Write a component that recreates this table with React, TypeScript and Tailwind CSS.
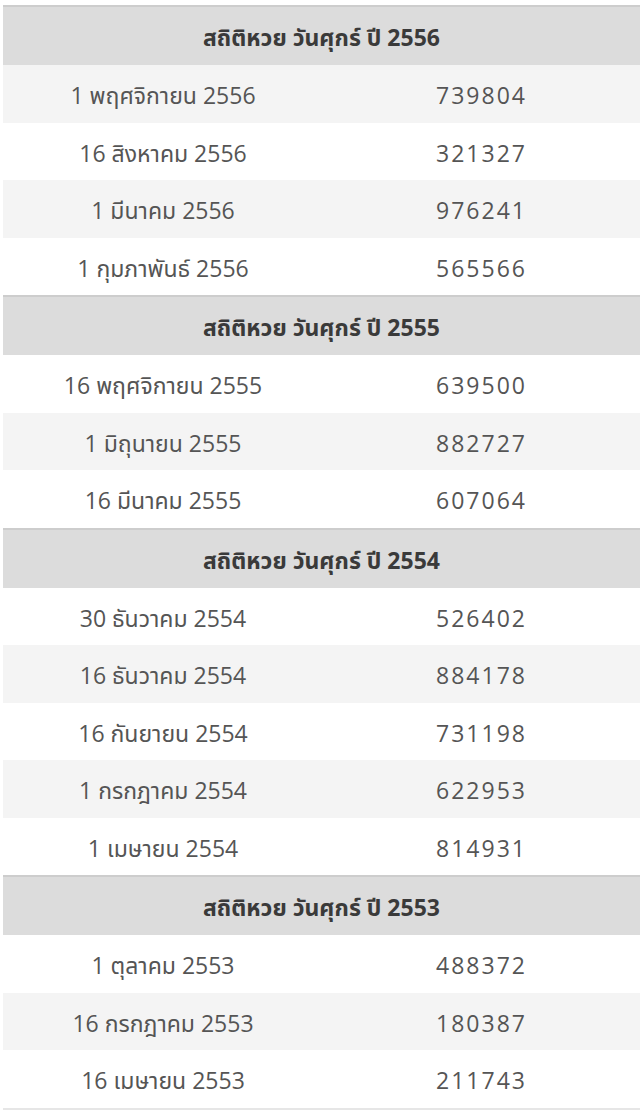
import React from 'react';

type Row = { date: string; num: string };
type Section = { year: string; rows: Row[] };

const sections: Section[] = [
  {
    year: '2556',
    rows: [
      { date: '1 พฤศจิกายน 2556', num: '739804' },
      { date: '16 สิงหาคม 2556', num: '321327' },
      { date: '1 มีนาคม 2556', num: '976241' },
      { date: '1 กุมภาพันธ์ 2556', num: '565566' },
    ],
  },
  {
    year: '2555',
    rows: [
      { date: '16 พฤศจิกายน 2555', num: '639500' },
      { date: '1 มิถุนายน 2555', num: '882727' },
      { date: '16 มีนาคม 2555', num: '607064' },
    ],
  },
  {
    year: '2554',
    rows: [
      { date: '30 ธันวาคม 2554', num: '526402' },
      { date: '16 ธันวาคม 2554', num: '884178' },
      { date: '16 กันยายน 2554', num: '731198' },
      { date: '1 กรกฎาคม 2554', num: '622953' },
      { date: '1 เมษายน 2554', num: '814931' },
    ],
  },
  {
    year: '2553',
    rows: [
      { date: '1 ตุลาคม 2553', num: '488372' },
      { date: '16 กรกฎาคม 2553', num: '180387' },
      { date: '16 เมษายน 2553', num: '211743' },
    ],
  },
];

const App: React.FC = () => {
  // stripe like a tbody: headers of later sections count as rows
  let idx = 0;

  return (
    <div
      className="w-[640px] h-[1110px] overflow-hidden bg-white pt-[5px] pl-[3px]"
      style={{ fontFamily: '"Open Sans", "Noto Sans", "Noto Sans Thai", sans-serif' }}
    >
      <div className="flex flex-col border-b-2 border-[#e6e6e6]">
        {sections.map((s, si) => {
          if (si > 0) idx++;
          return (
            <React.Fragment key={s.year}>
              <div className="h-[60px] flex items-center justify-center pt-[3px] bg-[#dcdcdc] border-t-2 border-[#cdcdcd] text-[23px] font-bold text-[#3a3a3a]">
                สถิติหวย วันศุกร์ ปี {s.year}
              </div>
              {s.rows.map((r) => {
                idx++;
                const gray = idx % 2 === 1;
                return (
                  <div
                    key={r.date}
                    className={`h-[57.5px] grid grid-cols-[320px_1fr] items-center pt-[3px] text-[23px] text-[#555555] ${gray ? 'bg-[#f4f4f4]' : 'bg-white'}`}
                  >
                    <span className="text-center">{r.date}</span>
                    <span className="text-center tracking-[2px]">{r.num}</span>
                  </div>
                );
              })}
            </React.Fragment>
          );
        })}
      </div>
    </div>
  );
};

export default App;
